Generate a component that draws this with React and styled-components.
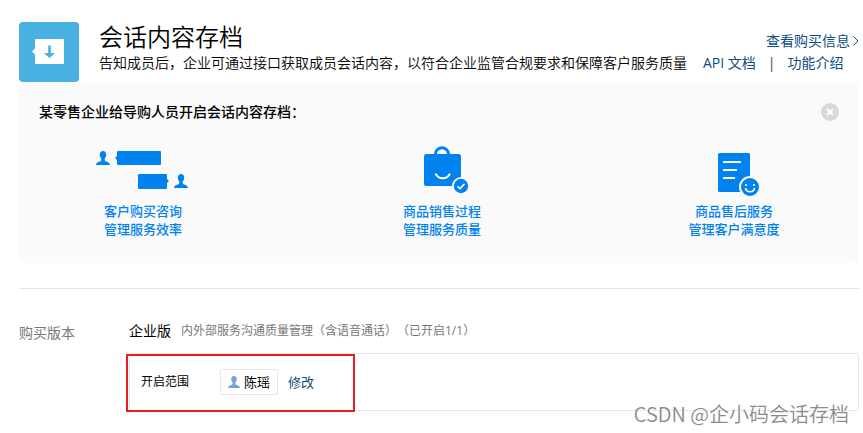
import styled, { createGlobalStyle } from "styled-components";

const GlobalStyle = createGlobalStyle`
  * {
    box-sizing: border-box;
  }
  body {
    margin: 0;
    background-color: #ffffff;
    color: #000000;
    font-family: "Open Sans", "Noto Sans CJK SC", sans-serif;
    font-size: 14px;
    line-height: 22px;
    text-spacing-trim: space-all;
  }
  h1, h2, p {
    margin: 0;
  }
  button {
    padding: 0;
    border: none;
    background: none;
    font: inherit;
    cursor: pointer;
  }
`;

const Page = styled.main`
  position: relative;
  padding: 22px 4px 20px 19px;
`;

const Header = styled.header`
  display: flex;
  gap: 20px;
  margin-bottom: 1px;
`;

const AppIcon = styled.svg`
  flex: none;
  width: 60px;
  height: 60px;
`;

const HeaderBody = styled.div`
  flex: 1;
`;

const TitleRow = styled.div`
  display: flex;
  align-items: baseline;
  justify-content: space-between;
  height: 30px;
`;

const Title = styled.h1`
  font-size: 24px;
  font-weight: 350;
  line-height: 30px;
`;

const DescRow = styled.div`
  display: flex;
  white-space: nowrap;
  p {
    font-weight: 350;
  }
`;

const Links = styled.nav`
  display: flex;
  gap: 12px;
  margin-left: 16px;
  color: #0f4c81;
`;

const Link = styled.a`
  display: inline-flex;
  align-items: center;
  gap: 2px;
  color: #0f4c81;
  font-size: ${(props) => props.$size || 14}px;
  text-decoration: none;
`;

const Panel = styled.section`
  height: 180px;
  padding: 18px 0;
  border-radius: 6px;
  background-color: #fafafa;
`;

const PanelHead = styled.div`
  display: flex;
  align-items: center;
  justify-content: space-between;
  padding: 0 20px;
  h2 {
    font-size: 14px;
    font-weight: 500;
    line-height: 22px;
  }
`;

const CloseButton = styled.button`
  display: flex;
`;

const Features = styled.ul`
  display: grid;
  grid-template-columns: 248fr 350fr 234fr;
  margin: 0;
  padding: 20px 8px 0 0;
  list-style: none;
`;

const Feature = styled.li`
  display: flex;
  flex-direction: column;
  align-items: center;
  color: #0082ef;
  font-size: 13px;
  font-weight: 500;
  line-height: 18px;
  svg {
    width: 96px;
    height: 54px;
    margin-bottom: 5px;
  }
`;

const Divider = styled.hr`
  height: 1px;
  margin: 25px 0 31px;
  border: none;
  background-color: #e4e4e4;
`;

const Version = styled.section`
  display: flex;
  .label {
    width: 110px;
    padding-top: 2px;
    color: #787878;
  }
`;

const VersionBody = styled.div`
  flex: 1;
`;

const VersionInfo = styled.p`
  display: flex;
  gap: 10px;
  margin-bottom: 11px;
  span {
    color: #787878;
    font-size: 12px;
  }
`;

const RangeBox = styled.div`
  position: relative;
  display: flex;
  align-items: center;
  height: 58px;
  padding: 0 11px;
  border: 1px solid #e4e6e9;
  border-radius: 2px;
`;

const RangeLabel = styled.span`
  width: 79px;
  font-size: 12px;
`;

const Member = styled.span`
  display: flex;
  align-items: center;
  gap: 4px;
  height: 26px;
  margin-right: 10px;
  padding: 0 7px;
  border: 1px solid #e4e6e9;
  border-radius: 2px;
  font-size: 13px;
  line-height: 20px;
`;

// red frame drawn over the corner of the range box
const Highlight = styled.div`
  position: absolute;
  top: 0;
  left: -4px;
  width: 229px;
  height: 58px;
  border: 2px solid #ed1c24;
`;

const Watermark = styled.div`
  position: absolute;
  right: 14px;
  bottom: 4px;
  color: #8c8c8c;
  font-family: "Noto Sans CJK SC", sans-serif;
  font-size: 20px;
  font-weight: 350;
  line-height: 26px;
  text-shadow: 1px 1px 0 #ffffff;
`;

const personPath =
  "M7 0c2 0 3.200 1.400 3.200 3.500 0 1.700-.6 3-1.500 3.900v1.500c0 .7.500 1.100 1.500 1.500 2.100.8 3.800 1.300 3.800 3.600H0c0-2.300 1.700-2.800 3.800-3.600 1-.4 1.500-.8 1.500-1.500V7.400C4.400 6.500 3.800 5.200 3.800 3.500 3.800 1.400 5 0 7 0z";

function ChatIcon() {
  return (
    <svg viewBox="0 0 96 54" fill="#0082ef" aria-hidden="true">
      <path transform="translate(1 8)" d={personPath} />
      <path d="M23 8h42a1 1 0 0 1 1 1v12a1 1 0 0 1-1 1H23a1 1 0 0 1-1-1v-4l-2-2 2-2V9a1 1 0 0 1 1-1z" />
      <path d="M44 31h27a1 1 0 0 1 1 1v4l2 2-2 2v5a1 1 0 0 1-1 1H44a1 1 0 0 1-1-1V32a1 1 0 0 1 1-1z" />
      <path transform="translate(79 31)" d={personPath} />
    </svg>
  );
}

function BagIcon() {
  return (
    <svg viewBox="0 0 96 54" fill="none" aria-hidden="true">
      <path d="M41.300 12V11.500a6.700 6.700 0 0 1 13.400 0V12" stroke="#0082ef" strokeWidth="3" />
      <rect x="30" y="11" width="37" height="32" rx="2.500" fill="#0082ef" />
      <path d="M42 31.500c3 5 10.500 5 13.500 0" stroke="#fff" strokeWidth="2.200" strokeLinecap="round" />
      <circle cx="67" cy="43" r="9" fill="#fafafa" />
      <circle cx="67" cy="43" r="7.200" fill="#0082ef" />
      <path d="M63.500 43.300l2.500 2.400 4.500-5" stroke="#fff" strokeWidth="1.600" />
    </svg>
  );
}

function ServiceIcon() {
  return (
    <svg viewBox="0 0 96 54" fill="none" aria-hidden="true">
      <rect x="32" y="10" width="32" height="39" rx="1.500" fill="#0082ef" />
      <path d="M37 19h18M37 27h14M37 35h12" stroke="#fff" strokeWidth="2" />
      <circle cx="64" cy="44" r="11" fill="#fafafa" />
      <circle cx="64" cy="44" r="9" fill="#0082ef" />
      <circle cx="60" cy="42" r="1.100" fill="#fff" />
      <circle cx="68" cy="42" r="1.100" fill="#fff" />
      <path d="M59.500 45c.5 5 8.500 5 9 0" stroke="#fff" strokeWidth="1.600" />
    </svg>
  );
}

const features = [
  { icon: ChatIcon, lines: ["客户购买咨询", "管理服务效率"] },
  { icon: BagIcon, lines: ["商品销售过程", "管理服务质量"] },
  { icon: ServiceIcon, lines: ["商品售后服务", "管理客户满意度"] },
];

function App() {
  return (
    <>
      <GlobalStyle />
      <Page>
        <Header>
          <AppIcon viewBox="0 0 60 60" aria-hidden="true">
            <rect width="60" height="60" rx="4" fill="#48b1e1" />
            <path
              d="M17 17h27a1 1 0 0 1 1 1v23a1 1 0 0 1-1 1H17a1 1 0 0 1-1-1v-8.500l-3-3 3-3V18a1 1 0 0 1 1-1z"
              fill="#fff"
            />
            <path d="M29.200 23.500h2.600V31h4.200l-5.500 5-5.500-5h4.200z" fill="#48b1e1" />
          </AppIcon>
          <HeaderBody>
            <TitleRow>
              <Title>会话内容存档</Title>
              <Link href="#purchase">
                查看购买信息
                <svg width="7" height="12" viewBox="0 0 7 12" aria-hidden="true">
                  <path d="M1.500 1.500L6 6l-4.500 4.500" fill="none" stroke="#0f4c81" />
                </svg>
              </Link>
            </TitleRow>
            <DescRow>
              <p>告知成员后，企业可通过接口获取成员会话内容，以符合企业监管合规要求和保障客户服务质量</p>
              <Links>
                <Link href="#api">API 文档</Link>
                <span>|</span>
                <Link href="#intro">功能介绍</Link>
              </Links>
            </DescRow>
          </HeaderBody>
        </Header>

        <Panel>
          <PanelHead>
            <h2>某零售企业给导购人员开启会话内容存档：</h2>
            <CloseButton type="button" aria-label="关闭">
              <svg width="18" height="18" viewBox="0 0 18 18">
                <circle cx="9" cy="9" r="9" fill="#d8d8d8" />
                <path d="M6 6l6 6M12 6l-6 6" stroke="#fff" strokeWidth="2" />
              </svg>
            </CloseButton>
          </PanelHead>
          <Features>
            {features.map(({ icon: Icon, lines }) => (
              <Feature key={lines[0]}>
                <Icon />
                {lines.map((line) => (
                  <span key={line}>{line}</span>
                ))}
              </Feature>
            ))}
          </Features>
        </Panel>

        <Divider />

        <Version>
          <div className="label">购买版本</div>
          <VersionBody>
            <VersionInfo>
              企业版
              <span>内外部服务沟通质量管理（含语音通话）（已开启1/1）</span>
            </VersionInfo>
            <RangeBox>
              <RangeLabel>开启范围</RangeLabel>
              <Member>
                <svg width="12" height="12" viewBox="0 0 14 14" aria-hidden="true">
                  <path d={personPath} fill="#7ba3d0" />
                </svg>
                陈瑶
              </Member>
              <Link as="button" type="button" $size={13}>
                修改
              </Link>
              <Highlight />
            </RangeBox>
          </VersionBody>
        </Version>
        <Watermark>CSDN @企小码会话存档</Watermark>
      </Page>
    </>
  );
}

export default App;
